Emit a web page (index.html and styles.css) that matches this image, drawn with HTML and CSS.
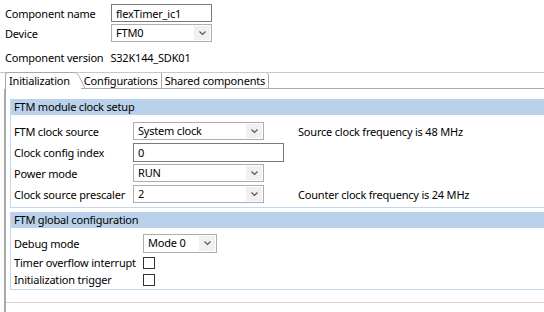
FILE: index.html
```html
<!DOCTYPE html>
<html>

<head>
    <link rel="stylesheet" href="styles.css">
</head>

<body>
    <div class="head">
        <div class="head-row">
            <span class="head-label">Component name</span>
            <input type="text" class="textbox name-box" value="flexTimer_ic1" readonly>
        </div>
        <div class="head-row">
            <span class="head-label">Device</span>
            <div class="combo device-combo">
                <span class="combo-value">FTM0</span>
                <span class="combo-arrow"><svg width="7" height="5" viewBox="0 0 7 5"><path d="M0.5 0.5 L3.5 3.5 L6.5 0.5" fill="none" stroke="#555" stroke-width="1.2"/></svg></span>
            </div>
        </div>
        <div class="version-row">
            <span>Component version</span>
            <span>S32K144_SDK01</span>
        </div>
    </div>

    <div class="tabs">
        <div class="tab tab-active">Initialization</div>
        <svg class="tab-slant" width="12" height="17" viewBox="0 0 12 17"><path d="M0 0.5 C4 0.5 5 2 7 6 L12 16.5" fill="none" stroke="#a9a9a9" stroke-width="1"/></svg>
        <div class="tab">Configurations</div>
        <div class="tab tab-last">Shared components</div>
        <div class="tab-fill"></div>
    </div>

    <div class="panel">
        <div class="section">
            <div class="section-title">FTM module clock setup</div>
            <div class="section-body clock-grid">
                <span>FTM clock source</span>
                <div class="combo wide-combo">
                    <span class="combo-value">System clock</span>
                    <span class="combo-arrow"><svg width="7" height="5" viewBox="0 0 7 5"><path d="M0.5 0.5 L3.5 3.5 L6.5 0.5" fill="none" stroke="#555" stroke-width="1.2"/></svg></span>
                </div>
                <span class="note">Source clock frequency is 48 MHz</span>

                <span>Clock config index</span>
                <input type="text" class="textbox index-box" value="0" readonly>
                <span></span>

                <span>Power mode</span>
                <div class="combo wide-combo">
                    <span class="combo-value">RUN</span>
                    <span class="combo-arrow"><svg width="7" height="5" viewBox="0 0 7 5"><path d="M0.5 0.5 L3.5 3.5 L6.5 0.5" fill="none" stroke="#555" stroke-width="1.2"/></svg></span>
                </div>
                <span></span>

                <span>Clock source prescaler</span>
                <div class="combo wide-combo">
                    <span class="combo-value">2</span>
                    <span class="combo-arrow"><svg width="7" height="5" viewBox="0 0 7 5"><path d="M0.5 0.5 L3.5 3.5 L6.5 0.5" fill="none" stroke="#555" stroke-width="1.2"/></svg></span>
                </div>
                <span class="note">Counter clock frequency is 24 MHz</span>
            </div>
        </div>

        <div class="section">
            <div class="section-title">FTM global configuration</div>
            <div class="section-body global-grid">
                <span>Debug mode</span>
                <div class="combo debug-combo">
                    <span class="combo-value">Mode 0</span>
                    <span class="combo-arrow"><svg width="7" height="5" viewBox="0 0 7 5"><path d="M0.5 0.5 L3.5 3.5 L6.5 0.5" fill="none" stroke="#555" stroke-width="1.2"/></svg></span>
                </div>

                <span>Timer overflow interrupt</span>
                <span class="check"></span>

                <span>Initialization trigger</span>
                <span class="check"></span>
            </div>
        </div>

        <div class="panel-rule"></div>
    </div>
</body>

</html>
```

FILE: styles.css
```css
body {
    margin: 0;
    padding-top: 4px;
    background-color: #ffffff;
    color: #000000;
    font-family: "Noto Sans", "Open Sans", sans-serif;
    font-size: 11px;
    letter-spacing: -0.2px;
    white-space: nowrap;
    overflow: hidden;
}

.head {
    padding-left: 5px;
}

.head-row {
    display: grid;
    grid-template-columns: 106px 101px;
    align-items: center;
    height: 18px;
    margin-bottom: 2px;
}

.version-row {
    display: flex;
    gap: 7px;
    align-items: center;
    height: 18px;
    margin-top: 6px;
}

.textbox {
    box-sizing: border-box;
    height: 18px;
    margin: 0;
    padding: 0 4px;
    border: 1px solid #7a7a7a;
    border-radius: 0;
    font-family: inherit;
    font-size: 11px;
    letter-spacing: -0.2px;
    color: #000000;
    outline: none;
}

.name-box {
    width: 101px;
}

.index-box {
    width: 151px;
    height: 19px;
}

.combo {
    box-sizing: border-box;
    display: flex;
    align-items: stretch;
    height: 18px;
    border: 1px solid #adadad;
    background-color: #ffffff;
}

.combo-value {
    flex: 1;
    padding-left: 4px;
    line-height: 16px;
}

.combo-arrow {
    display: flex;
    align-items: center;
    justify-content: center;
    width: 16px;
    margin: 1px;
    background-color: #f0f0f0;
}

.device-combo {
    width: 101px;
}

.tabs {
    display: flex;
    align-items: stretch;
    height: 17px;
    margin-top: 6px;
    box-sizing: border-box;
    border-top: 1px solid #c8c8c8;
}

.tab {
    padding: 0 3px;
    line-height: 15px;
    border-bottom: 1px solid #a9a9a9;
}

.tab-active {
    margin-left: 5px;
    margin-top: -1px;
    padding-left: 3px;
    padding-right: 3px;
    border-left: 1px solid #a9a9a9;
    border-top: 1px solid #a9a9a9;
    border-bottom: none;
    border-top-left-radius: 3px;
}

.tab-slant {
    flex: none;
    margin-top: -1px;
    margin-right: -4px;
}

.tab + .tab {
    border-left: 1px solid #a9a9a9;
}

.tab-last {
    border-right: 1px solid #a9a9a9;
    border-top-right-radius: 3px;
}

.tab-fill {
    flex: 1;
    border-bottom: 1px solid #a9a9a9;
}

.panel {
    margin-left: 4px;
    padding-top: 10px;
    height: 223px;
    border-left: 2px solid #a9a9a9;
}

.section {
    margin-left: 4px;
    margin-bottom: 4px;
    border: 1px solid #c3d8ee;
    border-right: none;
}

.section-title {
    height: 16px;
    margin-top: -1px;
    padding-left: 3px;
    line-height: 16px;
    background-color: #b9d1ea;
}

.section-body {
    display: grid;
    padding: 7px 0 4px 3px;
    align-items: center;
}

.clock-grid {
    grid-template-columns: 105px 151px auto;
    grid-auto-rows: 18px;
    row-gap: 3px;
    column-gap: 14px;
}

.wide-combo {
    width: 131px;
}

.global-grid {
    grid-template-columns: 129px auto;
    grid-template-rows: 21px 17px 17px;
    padding-top: 5px;
    padding-bottom: 1px;
}

.debug-combo {
    width: 74px;
    height: 19px;
}

.check {
    box-sizing: border-box;
    width: 12px;
    height: 12px;
    border: 1px solid #333333;
    background-color: #ffffff;
}

.panel-rule {
    margin-top: 12px;
    border-top: 1px solid #d4d4d4;
}
```
